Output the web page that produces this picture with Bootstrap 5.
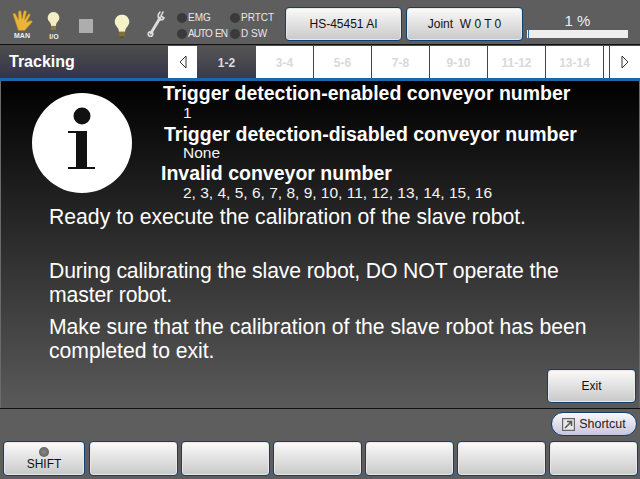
<!DOCTYPE html>
<html lang="en"><head><meta charset="utf-8"><title>Tracking</title>
<link rel="stylesheet" href="https://cdn.jsdelivr.net/npm/bootstrap@5.3.0/dist/css/bootstrap.min.css">
<style>
html,body{margin:0;width:640px;height:479px;overflow:hidden;background:#5e5e5e;font-family:"Liberation Sans",Arial,sans-serif}
.topbar{height:44px;background:#5e5e5e;padding-left:11px}
.ticon{display:block;flex:none}
.ictl{font-size:7px;line-height:8px;color:#eee;text-align:center;font-weight:700}
.hbox{width:22px;margin-top:9px;flex:none}
.iobox{width:14px;margin:11px 0 0 14px;flex:none}
.lamps{display:grid;grid-template-columns:53px 55px;row-gap:4px;margin-left:12px;width:108px;color:#e8e8e8;font-size:10px;line-height:12px;margin-top:12px;flex:none}
.lampi{display:flex;align-items:center;gap:1px;white-space:nowrap}
.nar{letter-spacing:-.9px;word-spacing:1px}
.dotl{width:10px;height:10px;border-radius:50%;background:#3a3a3a;flex:none}
.pbtn{background:linear-gradient(#fbfbfb,#c8c8c8);border:1px solid #0f3f73;border-radius:4px;box-shadow:inset 0 0 0 1px #e8e8e8;color:#111;font-size:12px;display:flex;align-items:center;justify-content:center;padding:0;white-space:pre;flex:none}
.b116{width:117px;height:34px}
.gaugewrap{width:101px;margin-left:4px;color:#eee;flex:none}
.pcnt{font-size:15px;line-height:18px;text-align:center;margin-top:12px;height:18px}
.gtrack{height:8px;background:#eee}
.gfill{height:8px;width:1px;background:#1d6fb8;margin-left:1px}
.titlerow{height:34px;background:linear-gradient(#4e4e4e,#34344a);border-top:1px solid #111;display:flex}
.ttl{width:168px;color:#fff;font-weight:700;font-size:16px;line-height:34px;padding-left:9px}
.tabrow{display:flex;flex:1;height:32px;background:#fff;margin-top:1px}
.tabi{width:58px;border-right:1px solid #444;color:#d9d9d9;font-size:12px;font-weight:700;display:flex;align-items:center;justify-content:center;padding-top:2px}
.tabi.cur{background:linear-gradient(#555,#3a3a4a);color:#ddd;border-right:0;width:59px}
.tabl{width:29px;border-top-left-radius:8px;display:flex;align-items:center;justify-content:center;background:#fff}
.tabr{width:31px;border-top-right-radius:8px;border-left:1px solid #444;display:flex;align-items:center;justify-content:center;background:#fff}
.tabs{width:5px;background:#fff}
.bluel{height:3px;background:#1c67a8}
.panelm{height:327px;background:linear-gradient(#000,#5a5a5a);border-left:1px solid #6a6a6a;border-right:1px solid #6a6a6a;color:#fff;position:relative}
.hdrarea{display:flex;height:124px}
.infoc{width:100px;height:100px;margin:12px 0 0 31px;flex:none}
.lst{margin-left:29px}
.h1a,.h1b,.h1c{font-weight:700;white-space:nowrap;line-height:20px;font-size:19.5px}
.h1a{margin-top:2px;margin-left:2px}
.h1b{margin-left:3px;margin-top:2px}
.h1c{margin-top:1px}
.vala,.valb,.valc{font-size:15.5px;line-height:19px;margin-left:22px;white-space:nowrap;color:#f4f4f4}
.valb{line-height:18px}
.msg{font-size:21.2px;line-height:24px;margin:0 0 0 48px;width:545px}
.m1{margin-top:0}
.m2{margin-top:30px;letter-spacing:-.13px}
.m3{margin-top:8px;letter-spacing:-.035px}
.exitw{position:absolute;right:3px;bottom:5px}
.bexit{width:89px;height:34px}
.foot{border-top:1px solid #111;height:71px;background:#5e5e5e}
.scutw{display:flex;justify-content:flex-end;padding:3px 3px 0 0;height:32px}
.scut{width:86px;height:24px;border-radius:12px;border:1px solid #0f3f73;background:linear-gradient(#f8f8fc,#c9c5dc);color:#222;font-size:12.500px;display:flex;align-items:center;justify-content:center;gap:4px;padding:0}
.fkeys{display:flex;padding-left:3px;gap:3px}
.fk{height:35px;width:89px}
.fk.sh{width:82px;flex-direction:column;margin-right:1px}
.led{width:10px;height:10px;border-radius:50%;background:radial-gradient(#8a8a8a,#555);margin-bottom:1px}
.lblS{line-height:13px}
</style></head><body>
<div class="topbar d-flex align-items-start">
  <div class="hbox">
    <svg class="ticon" width="22" height="23" viewBox="0 0 24 24"><path d="M5 14 L2 5 Q3 3 5 5 L8 11 L8 3 Q9 0 11 2 L12 10 L14 2 Q15 0 17 2 L15 11 L19 5 Q21 4 21 6 L17 14 L21 12 Q24 12 23 14 L15 23 L8 23 Z" fill="#e8b53a" stroke="#a87a1e" stroke-width=".6"/></svg>
    <div class="ictl">MAN</div>
  </div>
  <div class="iobox">
    <svg class="ticon" width="13" height="20" viewBox="0 0 16 24"><path d="M8 1a7 7 0 0 1 5 12c-1 1-2 3-2 5H5c0-2-1-4-2-5A7 7 0 0 1 8 1z" fill="#f2edc4"/><rect x="5" y="18" width="6" height="5" fill="#8a7a3a"/></svg>
    <div class="ictl" style="margin-top:2px">I/O</div>
  </div>
  <svg class="ticon" width="14" height="14" viewBox="0 0 14 14" style="margin:19px 0 0 18px"><rect width="14" height="14" fill="#adadad"/></svg>
  <svg class="ticon" width="16" height="24" viewBox="0 0 20 31" style="margin:14px 0 0 21px"><path d="M10 1a9 9 0 0 1 7 15c-2 2-3 4-3 7H6c0-3-1-5-3-7A9 9 0 0 1 10 1z" fill="#f6f1c6"/><rect x="6" y="23" width="8" height="6" fill="#7e7038"/><rect x="8" y="29" width="4" height="2" fill="#5a5028"/></svg>
  <svg class="ticon" width="18" height="27" viewBox="0 0 18 27" style="margin:11px 0 0 17px"><g fill="none" stroke="#ddd" stroke-linecap="round"><path d="M4 22 L13 7" stroke-width="2.800"/><circle cx="3.500" cy="23" r="2.300" stroke-width="1.600"/><path d="M16 1 L14 5 L17 7 M13 1 Q10 4 12 8 Q15 10 17 7" stroke-width="1.600"/></g></svg>
  <div class="lamps">
    <div class="lampi"><span class="dotl"></span>EMG</div><div class="lampi"><span class="dotl"></span>PRTCT</div>
    <div class="lampi"><span class="dotl"></span><span class="nar">AUTO EN</span></div><div class="lampi"><span class="dotl"></span>D SW</div>
  </div>
  <button class="pbtn b116" style="margin:7px 0 0 0">HS-45451 AI</button>
  <button class="pbtn b116" style="margin:7px 0 0 4px">Joint  W 0 T 0</button>
  <div class="gaugewrap"><div class="pcnt">1 %</div><div class="gtrack"><div class="gfill"></div></div></div>
</div>
<div class="titlerow">
  <div class="ttl">Tracking</div>
  <div class="tabrow">
    <div class="tabl"><svg width="8" height="14" viewBox="0 0 8 14"><path d="M7 1 L1 7 L7 13Z" fill="#fff" stroke="#333"/></svg></div>
    <div class="tabi cur">1-2</div><div class="tabi">3-4</div><div class="tabi">5-6</div><div class="tabi">7-8</div><div class="tabi">9-10</div><div class="tabi">11-12</div><div class="tabi">13-14</div>
    <div class="tabs"></div>
    <div class="tabr"><svg width="8" height="14" viewBox="0 0 8 14"><path d="M1 1 L7 7 L1 13Z" fill="#fff" stroke="#333"/></svg></div>
  </div>
</div>
<div class="bluel"></div>
<div class="panelm">
  <div class="hdrarea">
    <svg class="infoc" viewBox="0 0 100 100"><circle cx="50" cy="50" r="50" fill="#fff"/><circle cx="50" cy="23" r="8.500" fill="#111"/><path d="M36 38H55V74H63V76H36V74H44V40H36Z" fill="#111"/></svg>
    <div class="lst">
      <div class="h1a">Trigger detection-enabled conveyor number</div><div class="vala">1</div>
      <div class="h1b">Trigger detection-disabled conveyor number</div><div class="valb">None</div>
      <div class="h1c">Invalid conveyor number</div><div class="valc">2, 3, 4, 5, 6, 7, 8, 9, 10, 11, 12, 13, 14, 15, 16</div>
    </div>
  </div>
  <p class="msg m1">Ready to execute the calibration of the slave robot.</p>
  <p class="msg m2">During calibrating the slave robot, DO NOT operate the master robot.</p>
  <p class="msg m3">Make sure that the calibration of the slave robot has been completed to exit.</p>
  <div class="exitw"><button class="pbtn bexit">Exit</button></div>
</div>
<div class="foot">
  <div class="scutw"><button class="scut"><svg width="13" height="13" viewBox="0 0 13 13"><rect x=".5" y=".5" width="12" height="12" fill="#e8e8e8" stroke="#666" stroke-width="1.400"/><path d="M3 10 L9 4 M5 3.500H9.500V8" stroke="#555" stroke-width="1.500" fill="none"/></svg>Shortcut</button></div>
  <div class="fkeys">
    <button class="pbtn fk sh"><span class="led"></span><span class="lblS">SHIFT</span></button>
    <button class="pbtn fk"></button><button class="pbtn fk"></button><button class="pbtn fk"></button><button class="pbtn fk"></button><button class="pbtn fk"></button><button class="pbtn fk"></button>
  </div>
</div>
<script src="https://cdn.jsdelivr.net/npm/bootstrap@5.3.0/dist/js/bootstrap.bundle.min.js"></script>
</body></html>
